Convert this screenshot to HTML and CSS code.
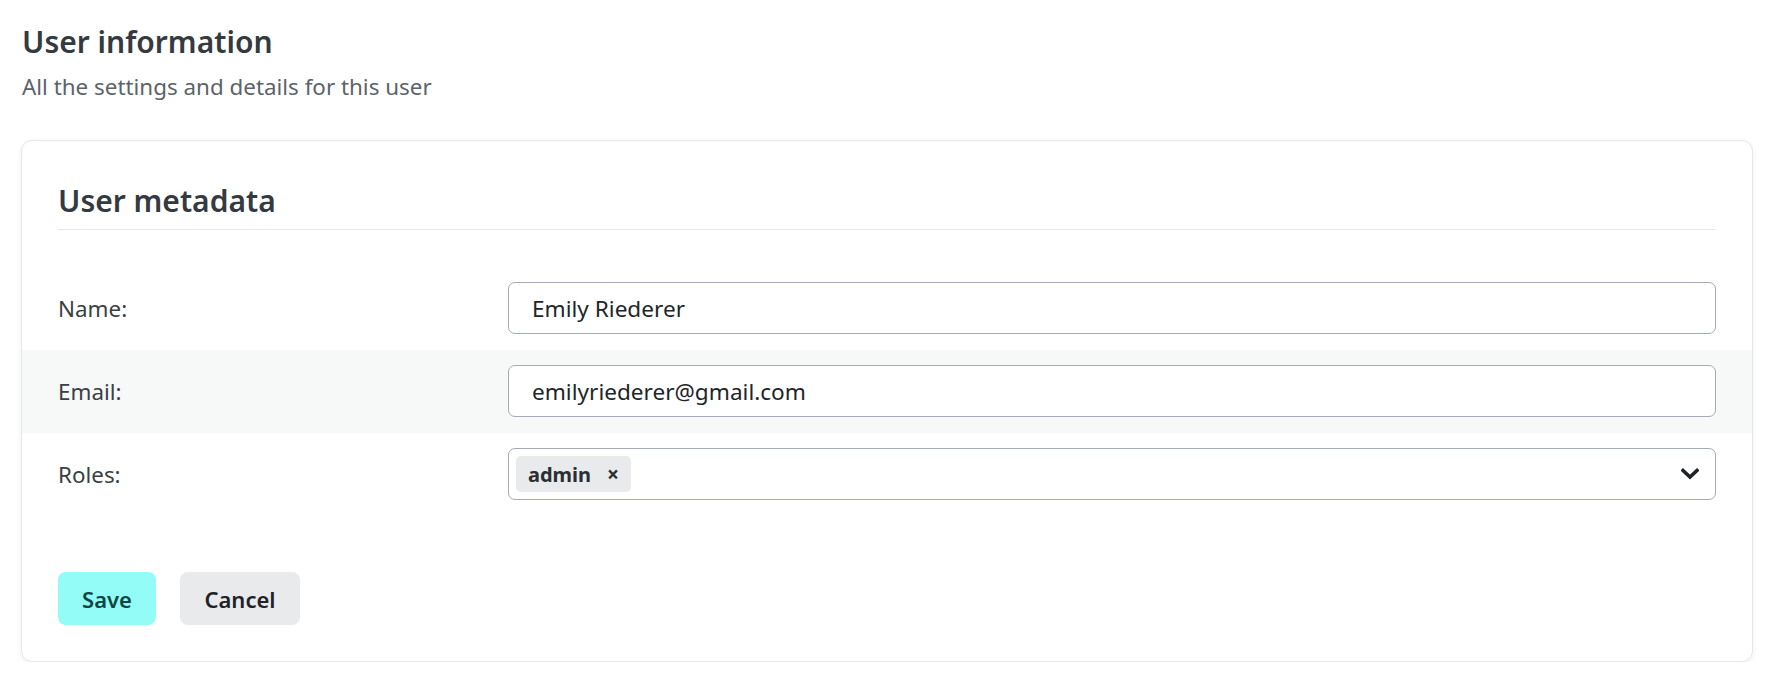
FILE: index.html
```html
<!DOCTYPE html>
<html lang="en">
<head>
<meta charset="utf-8">
<title>User information</title>
<link rel="stylesheet" href="styles.css">
</head>
<body>
<div class="page">
  <header class="page-header">
    <h1 class="page-title">User information</h1>
    <p class="page-subtitle">All the settings and details for this user</p>
  </header>

  <section class="card">
    <h2 class="card-title">User metadata</h2>

    <div class="form">
      <div class="form-row">
        <label class="form-label">Name:</label>
        <div class="form-input">Emily Riederer</div>
      </div>
      <div class="form-row form-row-alt">
        <label class="form-label">Email:</label>
        <div class="form-input">emilyriederer@gmail.com</div>
      </div>
      <div class="form-row">
        <label class="form-label">Roles:</label>
        <div class="form-input form-select">
          <span class="chip">admin <span class="chip-x">×</span></span>
          <svg class="chevron" width="18" height="12" viewBox="0 0 18 12">
            <path d="M2 2.5 L9 9 L16 2.5" fill="none" stroke="#1f2328" stroke-width="3.6" stroke-linecap="square" stroke-linejoin="miter"/>
          </svg>
        </div>
      </div>
    </div>

    <div class="actions">
      <button class="btn btn-save">Save</button>
      <button class="btn btn-cancel">Cancel</button>
    </div>
  </section>
</div>
</body>
</html>
```

FILE: styles.css
```css
* { box-sizing: border-box; }

html, body {
  margin: 0;
  padding: 0;
  background: #ffffff;
}

body {
  font-family: "Noto Sans", "Open Sans", sans-serif;
  color: #343a40;
}

.page {
  padding: 23px 12px 0 21px;
}

.page-header {
  padding-left: 1px;
}

.page-title {
  margin: 0;
  font-size: 30px;
  line-height: 38px;
  font-weight: 600;
  color: #343a40;
}

.page-subtitle {
  margin: 10px 0 0 0;
  font-size: 22.4px;
  line-height: 32px;
  color: #5c636a;
}

.card {
  margin-top: 37px;
  border: 1px solid #e6e7e9;
  border-radius: 11px;
  background: #ffffff;
  box-shadow: 0 2px 6px rgba(0, 0, 0, 0.06);
  padding: 37px 36px 36px 36px;
}

.card-title {
  margin: 0;
  font-size: 30px;
  line-height: 45px;
  font-weight: 600;
  color: #343a40;
  padding-bottom: 6px;
  border-bottom: 1px solid #e6e7e9;
}

.form {
  margin-top: 37px;
}

.form-row {
  display: grid;
  grid-template-columns: 450px 1fr;
  align-items: center;
  margin: 0 -36px;
  padding: 15px 36px 16px 36px;
}

.form-row-alt {
  background: #f7f9f9;
}

.form-label {
  font-size: 22.4px;
  color: #3a3f44;
}

.form-input {
  height: 52px;
  border: 1px solid #a2abb6;
  border-radius: 7px;
  background: #ffffff;
  padding: 0 23px;
  display: flex;
  align-items: center;
  font-size: 22.6px;
  color: #212529;
}

.form-select {
  padding: 0 16px 0 7px;
  justify-content: space-between;
}

.chip {
  display: inline-flex;
  align-items: center;
  height: 36px;
  padding: 0 12px 0 12px;
  border-radius: 5px;
  background: #e9eaec;
  font-size: 20px;
  font-weight: 700;
  color: #2b2f33;
}

.chip-x {
  margin-left: 16px;
  font-size: 21px;
  font-weight: 700;
}

.chevron {
  display: block;
}

.actions {
  margin-top: 56px;
  display: flex;
  gap: 24px;
}

.btn {
  height: 53px;
  border: none;
  border-radius: 8px;
  padding: 0 24px;
  font-family: inherit;
  font-size: 22px;
  font-weight: 600;
  cursor: pointer;
}

.btn-save {
  background: #93fcf6;
  color: #0f4744;
  width: 98px;
}

.btn-cancel {
  background: #e9eaec;
  color: #1f2328;
  width: 120px;
}
```
